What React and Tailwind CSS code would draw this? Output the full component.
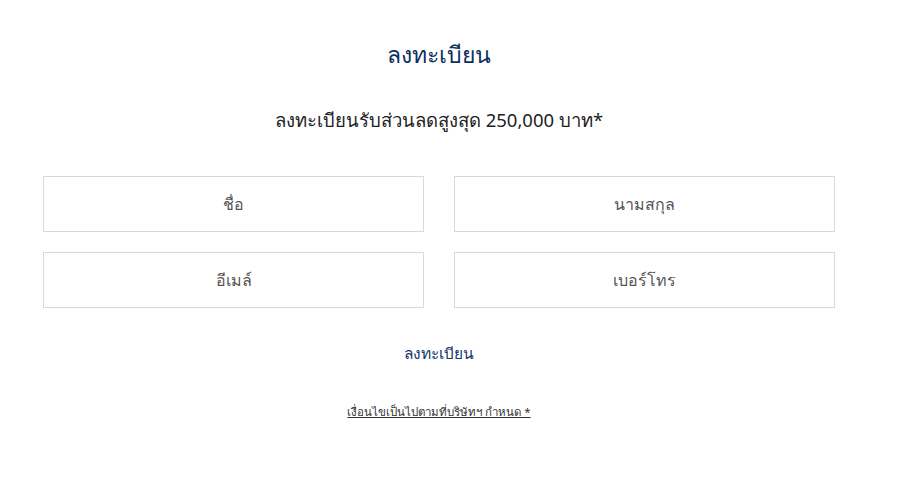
export default function App() {
  const fields = ['ชื่อ', 'นามสกุล', 'อีเมล์', 'เบอร์โทร']
  return (
    <div className="min-h-[485px] bg-white" style={{ fontFamily: '"Noto Sans", "Open Sans", sans-serif' }}>
      <div className="ml-[43px] w-[792px] pt-[37px] flex flex-col items-center">
        <h1 className="text-[23px] leading-[34px] text-[#0d2f5c]">ลงทะเบียน</h1>
        <p className="mt-[35px] text-[18.5px] leading-[28px] text-[#222]">ลงทะเบียนรับส่วนลดสูงสุด 250,000 บาท*</p>
        <div className="mt-[42px] w-full grid grid-cols-2 gap-x-[30px] gap-y-[20px]">
          {fields.map((f) => (
            <input
              key={f}
              placeholder={f}
              className="h-[56px] border border-[#d9d9d9] text-center text-[16px] text-[#444] placeholder:text-[#555] outline-none"
            />
          ))}
        </div>
        <button className="mt-[34px] text-[15.5px] leading-[22px] text-[#12386b]">ลงทะเบียน</button>
        <a className="mt-[39px] text-[11.5px] leading-[18px] text-[#333] underline">เงื่อนไขเป็นไปตามที่บริษัทฯ กำหนด *</a>
      </div>
    </div>
  )
}
